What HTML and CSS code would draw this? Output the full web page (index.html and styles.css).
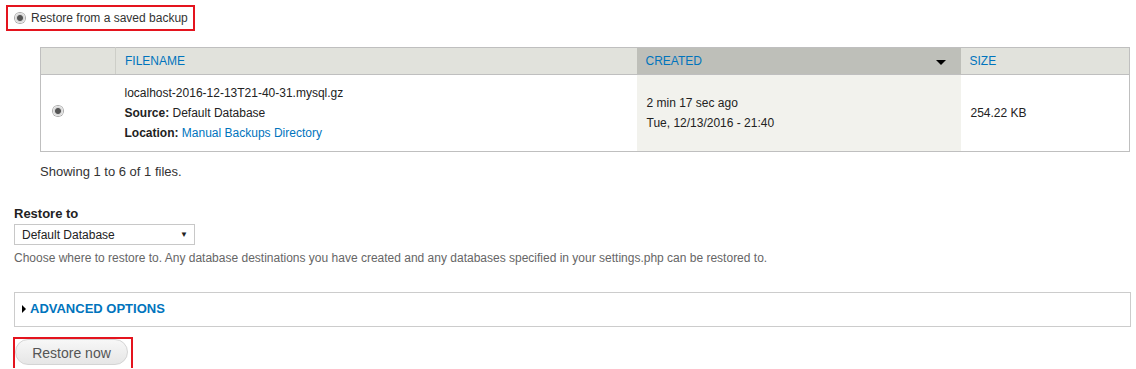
FILE: index.html
```html
<!DOCTYPE html>
<html lang="en">

<head>
  <meta charset="UTF-8">
  <meta name="viewport" content="width=device-width, initial-scale=1.0">
  <title>Restore</title>
  <link rel="stylesheet" href="styles.css">
</head>

<body>
  <div class="source">
    <span class="radio"></span>
    <span>Restore from a saved backup</span>
  </div>

  <table class="files">
    <thead>
      <tr>
        <th class="col-select"></th>
        <th class="col-name">Filename</th>
        <th class="col-created sorted">
          <span>Created</span>
          <span class="sort-arrow"></span>
        </th>
        <th class="col-size">Size</th>
      </tr>
    </thead>
    <tbody>
      <tr>
        <td class="col-select"><span class="radio"></span></td>
        <td class="col-name">
          <div>localhost-2016-12-13T21-40-31.mysql.gz</div>
          <div><b>Source:</b> Default Database</div>
          <div><b>Location:</b> <a href="#">Manual Backups Directory</a></div>
        </td>
        <td class="col-created sorted">
          <div>2 min 17 sec ago</div>
          <div>Tue, 12/13/2016 - 21:40</div>
        </td>
        <td class="col-size">254.22 KB</td>
      </tr>
    </tbody>
  </table>

  <p class="summary">Showing 1 to 6 of 1 files.</p>

  <div class="form-item">
    <label class="form-label">Restore to</label>
    <div class="select">
      <span>Default Database</span>
      <span class="select-arrow">&#9660;</span>
    </div>
    <p class="description">Choose where to restore to. Any database destinations you have created and any databases specified in your settings.php can be restored to.</p>
  </div>

  <div class="details">
    <span class="details-arrow"></span>
    <a href="#">Advanced options</a>
  </div>

  <div class="actions">
    <button class="button">Restore now</button>
  </div>
</body>

</html>
```

FILE: styles.css
```css
* {
  margin: 0;
  padding: 0;
  box-sizing: border-box;
}

body {
  font-family: "Liberation Sans", Arial, sans-serif;
  font-size: 13px;
  color: #333;
  background: #fff;
  width: 1136px;
}

a {
  color: #0074bd;
  text-decoration: none;
}

.radio {
  display: inline-block;
  flex-shrink: 0;
  width: 12px;
  height: 12px;
  border-radius: 50%;
  background: radial-gradient(circle, #555 0, #555 2.5px, #d6d6d6 3.5px, #e8e8e8 5px, #a9a9a9 5.5px, #a9a9a9 6px);
}

.source {
  display: flex;
  align-items: center;
  gap: 5px;
  width: 189px;
  height: 26px;
  margin: 5px 0 0 6px;
  padding-left: 6px;
  border: 2px solid #e4141e;
  white-space: nowrap;
  font-size: 12px;
}

.files {
  border-collapse: collapse;
  margin: 16px 0 0 40px;
  width: 1090px;
  border: 1px solid #bfbfbf;
  font-size: 12px;
}

.files th {
  height: 27px;
  background: #e1e2dc;
  color: #0074bd;
  font-weight: normal;
  text-transform: uppercase;
  text-align: left;
  padding: 0 10px 0 9px;
  border-bottom: 1px solid #bfbfbf;
}

.files th.col-select {
  border-right: 1px solid #cdcec8;
}

.files th.sorted {
  background: #bebfb9;
}

.files th.col-created {
  position: relative;
}

.sort-arrow {
  position: absolute;
  right: 15px;
  top: 12px;
  border-left: 5px solid transparent;
  border-right: 5px solid transparent;
  border-top: 5px solid #000;
}

.files td {
  height: 77px;
  padding: 0 10px;
  color: #222;
  line-height: 20px;
}

.files td.sorted {
  background: #f2f2ed;
}

.col-select {
  width: 75px;
}

.files td.col-select {
  padding-left: 11px;
}

.col-name {
  width: 521px;
}

.col-created {
  width: 324px;
}

.files td.col-name {
  padding-left: 9px;
  padding-bottom: 1px;
}

.summary {
  margin: 12px 0 0 40px;
  line-height: 16px;
}

.form-item {
  margin: 26px 0 0 14px;
}

.form-label {
  display: block;
  font-weight: bold;
  color: #222;
  line-height: 15px;
}

.select {
  display: flex;
  justify-content: space-between;
  align-items: center;
  width: 181px;
  height: 21px;
  margin-top: 3px;
  padding: 0 6px 0 7px;
  border: 1px solid #c8c8c8;
  font-size: 12px;
  color: #222;
}

.select-arrow {
  font-size: 8px;
}

.description {
  margin-top: 5px;
  font-size: 12px;
  color: #666;
  line-height: 16px;
}

.details {
  display: flex;
  align-items: center;
  gap: 4px;
  margin: 26px 0 0 14px;
  width: 1117px;
  height: 35px;
  padding: 0 0 2px 7px;
  border: 1px solid #ccc;
}

.details a {
  font-weight: bold;
  text-transform: uppercase;
}

.details-arrow {
  border-top: 4px solid transparent;
  border-bottom: 4px solid transparent;
  border-left: 4px solid #000;
}

.actions {
  display: flex;
  width: fit-content;
  margin: 10px 0 0 13px;
  padding: 0 3px 0 0;
  border: 2px solid #e4141e;
  border-bottom: 0;
  height: 31px;
}

.button {
  font-family: "Liberation Sans", Arial, sans-serif;
  font-size: 14px;
  color: #555;
  width: 113px;
  height: 26px;
  border: 1px solid #d4d4d4;
  border-radius: 13px;
  background: linear-gradient(#f7f7f7, #e6e6e6);
  padding-top: 1px;
}
```
